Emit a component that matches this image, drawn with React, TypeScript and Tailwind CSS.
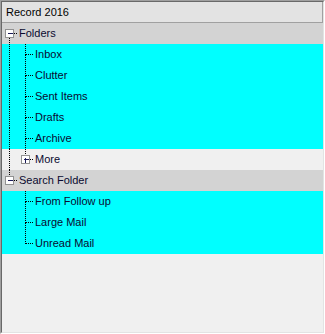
type Node = {
  label: string;
  level: number;
  bg: string;
  expander?: 'minus' | 'plus';
  // ancestor columns that carry a line straight through this row
  through: boolean[];
  first?: boolean;
  last?: boolean;
};

const rows: Node[] = [
  { label: 'Folders', level: 0, bg: 'bg-[#d3d3d3]', expander: 'minus', through: [], first: true },
  { label: 'Inbox', level: 1, bg: 'bg-[#00ffff]', through: [true] },
  { label: 'Clutter', level: 1, bg: 'bg-[#00ffff]', through: [true] },
  { label: 'Sent Items', level: 1, bg: 'bg-[#00ffff]', through: [true] },
  { label: 'Drafts', level: 1, bg: 'bg-[#00ffff]', through: [true] },
  { label: 'Archive', level: 1, bg: 'bg-[#00ffff]', through: [true] },
  { label: 'More', level: 1, bg: 'bg-[#f0f0f0]', expander: 'plus', through: [true], last: true },
  { label: 'Search Folder', level: 0, bg: 'bg-[#d3d3d3]', expander: 'minus', through: [], last: true },
  { label: 'From Follow up', level: 1, bg: 'bg-[#00ffff]', through: [false] },
  { label: 'Large Mail', level: 1, bg: 'bg-[#00ffff]', through: [false] },
  { label: 'Unread Mail', level: 1, bg: 'bg-[#00ffff]', through: [false], last: true },
];

function Dots({ x1, y1, x2, y2 }: { x1: number; y1: number; x2: number; y2: number }) {
  return <line x1={x1} y1={y1} x2={x2} y2={y2} stroke="#000" strokeWidth={1} strokeDasharray="1 1" shapeRendering="crispEdges" />;
}

function Gutter({ node }: { node: Node }) {
  const w = (node.level + 1) * 16;
  const cx = node.level * 16 + 7.5;
  const cy = 10.5;
  return (
    <svg width={w} height={21} className="shrink-0">
      {node.through.map((on, i) => (on ? <Dots key={i} x1={i * 16 + 7.5} y1={0} x2={i * 16 + 7.5} y2={21} /> : null))}
      {!node.first && <Dots x1={cx} y1={0} x2={cx} y2={cy} />}
      {!node.last && <Dots x1={cx} y1={cy} x2={cx} y2={21} />}
      <Dots x1={cx} y1={cy} x2={node.level * 16 + 16} y2={cy} />
      {node.expander && (
        <g>
          <rect x={cx - 4} y={cy - 4} width={8} height={8} fill="#fff" stroke="#919191" shapeRendering="crispEdges" />
          <line x1={cx - 2} y1={cy} x2={cx + 3} y2={cy} stroke="#1c1c5a" shapeRendering="crispEdges" />
          {node.expander === 'plus' && (
            <line x1={cx} y1={cy - 2} x2={cx} y2={cy + 3} stroke="#1c1c5a" shapeRendering="crispEdges" />
          )}
        </g>
      )}
    </svg>
  );
}

export default function App() {
  return (
    <div className="w-[325px] h-[334px] border border-t-[#a0a0a0] border-l-[#a0a0a0] border-r-white border-b-white font-['Liberation_Sans',Arial,sans-serif] text-[11px] text-black">
      <div className="h-full border border-t-[#696969] border-l-[#696969] border-r-[#e3e3e3] border-b-[#e3e3e3] bg-[#f0f0f0] flex flex-col">
        {/* Column header */}
        <div className="h-[21px] flex items-center pl-[4px] bg-[#e3e3e3] border-r border-b border-[#a0a0a0]">
          Record 2016
        </div>

        {/* Tree */}
        <div className="flex flex-col">
          {rows.map((n) => (
            <div key={n.label} className={`h-[21px] flex items-center ${n.bg}`}>
              <Gutter node={n} />
              <span className="pl-[1px] leading-none text-[#0a0a30]">{n.label}</span>
            </div>
          ))}
        </div>
      </div>
    </div>
  );
}
